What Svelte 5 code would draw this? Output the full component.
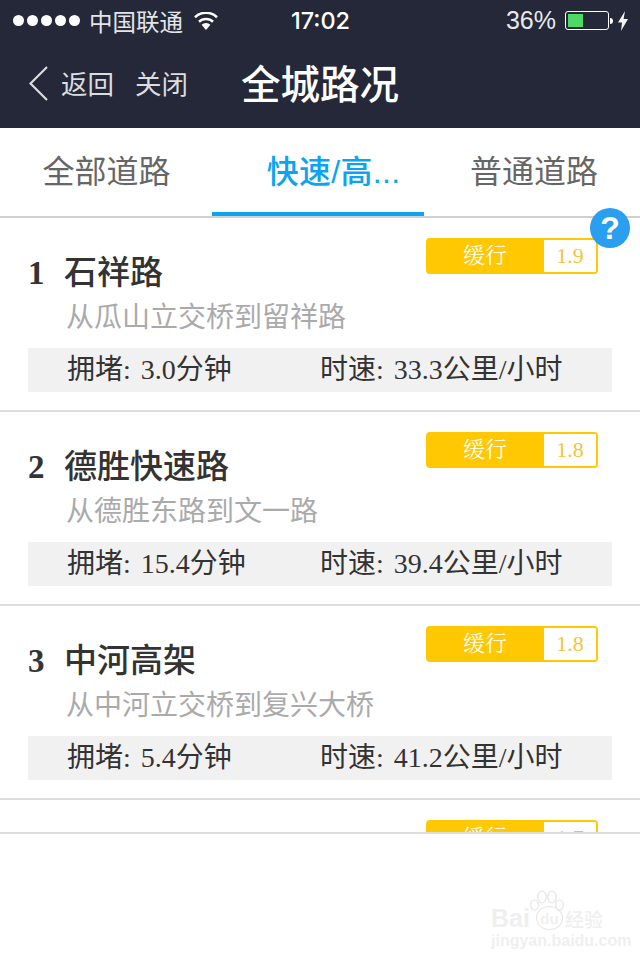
<script>
  const tabs = [
    { label: '全部道路' },
    { label: '快速/高...', active: true },
    { label: '普通道路' }
  ];
  const roads = [
    { name: '石祥路', from: '从瓜山立交桥到留祥路', level: '1.9', jam: '3.0', speed: '33.3' },
    { name: '德胜快速路', from: '从德胜东路到文一路', level: '1.8', jam: '15.4', speed: '39.4' },
    { name: '中河高架', from: '从中河立交桥到复兴大桥', level: '1.8', jam: '5.4', speed: '41.2' },
    { name: '保俶路', from: '从保俶路到天目山路', level: '1.7', jam: '4.2', speed: '28.6' }
  ];
</script>

<main>
  <header>
    <div class="status">
      <div class="carrier">
        <span class="dots"><i></i><i></i><i></i><i></i><i></i></span>
        <span>中国联通</span>
        <svg class="wifi" width="24" height="18" viewBox="0 0 24 18">
          <path d="M12 18 L7.6 12.8 A6.6 6.6 0 0 1 16.4 12.8 Z" fill="#fff" />
          <path d="M5 9.8 A10.2 10.2 0 0 1 19 9.8" fill="none" stroke="#fff" stroke-width="2.6" />
          <path d="M1 5.2 A16 16 0 0 1 23 5.2" fill="none" stroke="#fff" stroke-width="2.6" />
        </svg>
      </div>
      <div class="time">17:02</div>
      <div class="power">
        <span class="pct">36%</span>
        <span class="battery"><b></b></span>
        <span class="nub"></span>
        <svg class="bolt" width="10" height="20" viewBox="0 0 10 20">
          <path d="M7 0 L0 11.5 H4 L3 20 L10 8 H5.6 Z" fill="#f4f4f4" />
        </svg>
      </div>
    </div>
    <div class="nav">
      <svg class="back" width="20" height="36" viewBox="0 0 20 36">
        <path d="M18 1 L1.5 17.5 L18 34" fill="none" stroke="#dcdde0" stroke-width="2.2" />
      </svg>
      <span class="link first">返回</span>
      <span class="link">关闭</span>
      <h1>全城路况</h1>
    </div>
  </header>

  <nav class="tabs">
    {#each tabs as tab}
      <div class="tab" class:active={tab.active}>{tab.label}</div>
    {/each}
  </nav>

  <div class="help">?</div>

  <section class="list">
    {#each roads as road, i}
      <article class="row">
        <div class="head">
          <div class="name"><span class="num">{i + 1}</span>{road.name}</div>
          <div class="badge">
            <span class="label">缓行</span>
            <span class="value">{road.level}</span>
          </div>
        </div>
        <div class="from">{road.from}</div>
        <div class="stats">
          <span>拥堵: {road.jam}分钟</span>
          <span>时速: {road.speed}公里/小时</span>
        </div>
      </article>
    {/each}
  </section>

  <footer>
    <div class="mark">
      <svg class="paw" width="34" height="26" viewBox="0 0 34 26">
        <g fill="#fff" stroke="#e4e4e4" stroke-width="1.2">
          <ellipse cx="4.5" cy="15" rx="3.8" ry="5" />
          <ellipse cx="12" cy="7" rx="4.2" ry="6" />
          <ellipse cx="22" cy="7" rx="4.2" ry="6" />
          <ellipse cx="29.5" cy="15" rx="3.8" ry="5" />
        </g>
      </svg>
      <div class="brand"><span>Bai</span><span class="du">du</span><span class="jy">经验</span></div>
      <div class="site">jingyan.baidu.com</div>
    </div>
  </footer>
</main>

<style>
  :global(body) {
    background: #fff;
  }

  main {
    position: relative;
    width: 640px;
    height: 960px;
    overflow: hidden;
    background: #fff;
    font-family: "Liberation Serif", "Noto Sans CJK SC", serif;
  }

  header {
    height: 128px;
    background: #242838;
    color: #fff;
    font-family: "Liberation Sans", "Noto Sans CJK SC", sans-serif;
  }

  .status {
    display: grid;
    grid-template-columns: 1fr auto 1fr;
    align-items: center;
    height: 41px;
    padding: 0 12px 0 13px;
    font-size: 24px;
  }

  .carrier {
    display: flex;
    align-items: center;
    color: #e4e5e8;
    font-size: 23.5px;
  }

  .dots {
    display: flex;
    gap: 3px;
    margin-right: 9px;
  }

  .dots i {
    width: 11px;
    height: 11px;
    border-radius: 50%;
    background: #fff;
  }

  .wifi {
    margin-left: 11px;
  }

  .time {
    font-size: 23.5px;
    font-weight: 500;
    font-family: "Inter", "Liberation Sans", sans-serif;
  }

  .power {
    display: flex;
    align-items: center;
    justify-content: flex-end;
  }

  .pct {
    font-size: 25px;
    color: #e8e9eb;
    margin-right: 9px;
  }

  .battery {
    box-sizing: border-box;
    display: block;
    width: 44px;
    height: 19px;
    padding: 2px;
    border: 1px solid #fff;
    border-radius: 3px;
  }

  .battery b {
    display: block;
    width: 15px;
    height: 100%;
    background: #4cd964;
  }

  .nub {
    width: 3px;
    height: 6px;
    margin-left: 1px;
    background: #fff;
    border-radius: 0 3px 3px 0;
  }

  .bolt {
    margin-left: 5px;
  }

  .nav {
    display: flex;
    align-items: center;
    height: 85px;
    padding-left: 29px;
  }

  .back {
    margin-right: 12px;
  }

  .link {
    font-size: 26.5px;
    color: #dcdde0;
    margin: 0 21px 2px 0;
  }

  h1 {
    margin: 0 0 4px 32px;
    font-size: 39.5px;
    font-weight: 500;
    color: #fff;
  }

  .tabs {
    box-sizing: border-box;
    display: grid;
    grid-template-columns: 212px 212px 216px;
    height: 90px;
    border-bottom: 2px solid #d0d0d0;
    font-family: "Liberation Sans", "Noto Sans CJK SC", sans-serif;
  }

  .tab {
    box-sizing: border-box;
    height: 88px;
    padding-top: 4px;
    line-height: 80px;
    text-align: center;
    font-size: 32px;
    color: #666;
  }

  .tab:first-child {
    padding-left: 1px;
  }

  .tab:last-child {
    padding-left: 4px;
  }

  .tab.active {
    padding-left: 31px;
    color: #0ca4f0;
    font-weight: 500;
    letter-spacing: 0.3px;
    border-bottom: 4px solid #0ca4f0;
  }

  .help {
    position: absolute;
    left: 590px;
    top: 208px;
    width: 40px;
    height: 40px;
    border-radius: 50%;
    background: #2a9ff0;
    color: #fff;
    text-align: center;
    font: bold 32px/41px "Liberation Sans", sans-serif;
  }

  .list {
    height: 614px;
    overflow: hidden;
  }

  .row {
    box-sizing: border-box;
    height: 194px;
    padding: 20px 28px 0;
    border-bottom: 2px solid #dcdcdc;
  }

  .head {
    display: flex;
    justify-content: space-between;
    align-items: flex-start;
    height: 54px;
  }

  .name {
    padding-top: 15px;
    font-size: 33px;
    line-height: 40px;
    font-weight: 500;
    color: #333;
  }

  .num {
    display: inline-block;
    width: 36px;
    font-weight: bold;
    font-size: 33px;
  }

  .badge {
    box-sizing: border-box;
    display: flex;
    width: 172px;
    height: 36px;
    margin-right: 14px;
    border: 2px solid #ffc800;
    border-radius: 4px;
    background: #ffc800;
    font-size: 22px;
    line-height: 31px;
  }

  .label {
    width: 114px;
    margin-right: 2px;
    text-align: center;
    color: #fff;
    font-family: "Liberation Serif", "Noto Serif CJK SC", "Noto Sans CJK SC", serif;
  }

  .value {
    flex: 1;
    background: #fff;
    color: #f5c33b;
    text-align: center;
  }

  .from {
    margin: 8px 0 0 38px;
    font-size: 28px;
    line-height: 36px;
    color: #aaa;
  }

  .stats {
    display: grid;
    grid-template-columns: 253px 1fr;
    height: 44px;
    margin-top: 12px;
    padding-left: 39px;
    background: #f1f1f1;
    font-size: 28px;
    line-height: 43px;
    word-spacing: 3px;
    color: #333;
  }

  footer {
    position: relative;
    height: 126px;
    border-top: 2px solid #dcdcdc;
  }

  .mark {
    position: absolute;
    left: 491px;
    top: 54px;
    width: 120px;
    color: #efefef;
    font-family: "Liberation Sans", "Noto Sans CJK SC", sans-serif;
  }

  .paw {
    position: absolute;
    left: 39px;
    top: 2px;
  }

  .brand {
    display: flex;
    align-items: center;
    margin-top: 18px;
    height: 24px;
    font-size: 25px;
    font-weight: bold;
  }

  .du {
    display: flex;
    align-items: center;
    justify-content: center;
    width: 25px;
    height: 22px;
    margin: 0 0 0 6px;
    border: 1px solid #e6e6e6;
    border-radius: 50%;
    font-size: 15px;
  }

  .jy {
    margin-left: 2px;
    font-size: 19px;
    font-weight: 500;
  }

  .site {
    margin-top: 2px;
    font-size: 16px;
    line-height: 18px;
    font-weight: bold;
    white-space: nowrap;
  }
</style>
